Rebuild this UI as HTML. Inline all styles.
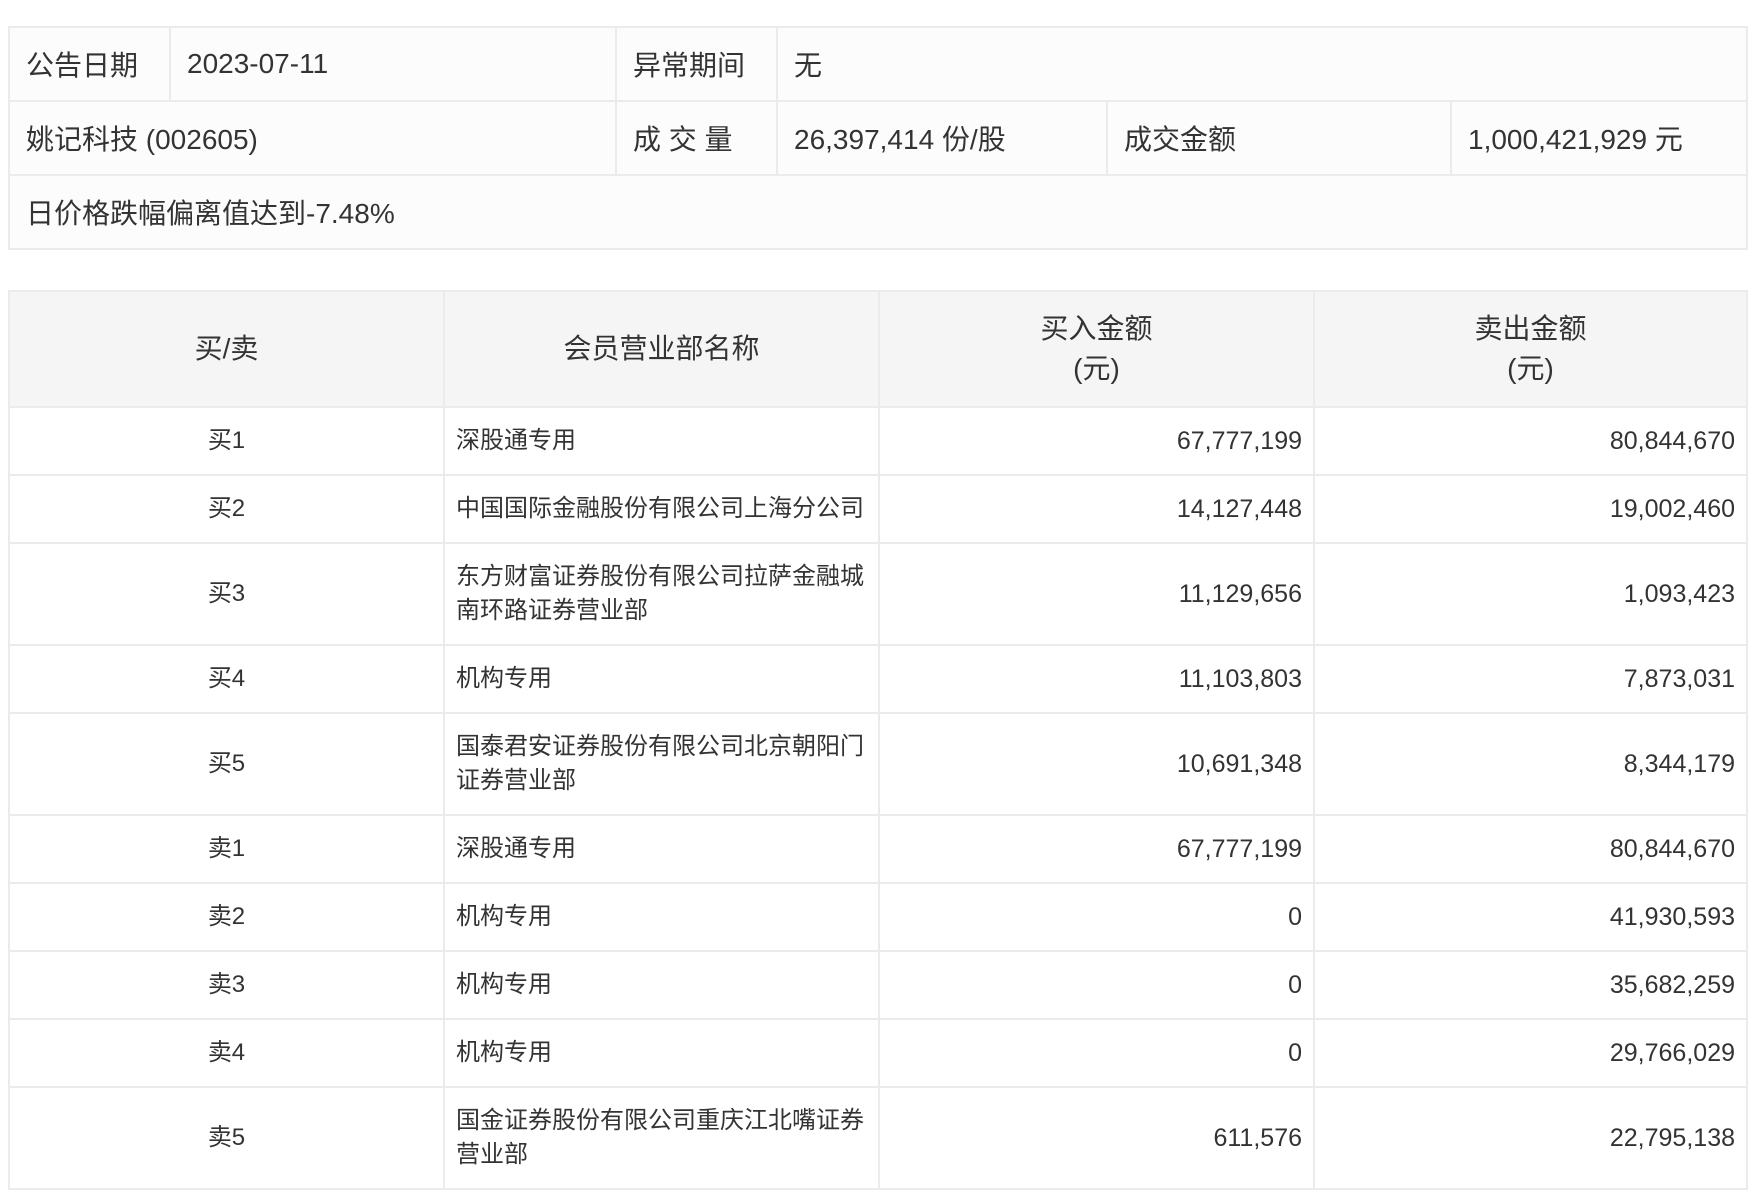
<!DOCTYPE html>
<html><head><meta charset="utf-8"><style>
body{margin:0;background:#fff;font-family:"Liberation Sans","Noto Sans CJK SC",sans-serif;color:#333;}
table{border-collapse:collapse;table-layout:fixed;position:absolute;left:8px;}
td,th{border:2px solid #ebebeb;}
#t1{top:26px;width:1740px;}
#t1 td{background:#fcfcfc;height:72px;font-size:28px;padding:0 16px;white-space:nowrap;}
#t2{top:290px;width:1740px;}
#t2 th{background:#f5f5f5;font-weight:normal;font-size:28px;line-height:40px;height:112px;}
#t2 td{font-size:24px;line-height:34px;height:66px;padding:0 11px;white-space:nowrap;overflow:visible;}
#t2 td.r{font-size:25px;}
#t2 td.c{text-align:center;}
#t2 td.r{text-align:right;}
#t2 tr.d td{height:100px;}
</style></head><body>
<table id="t1">
<colgroup><col style="width:161px"><col style="width:446px"><col style="width:161px"><col style="width:330px"><col style="width:344px"><col></colgroup>
<tr><td>公告日期</td><td>2023-07-11</td><td>异常期间</td><td colspan="3">无</td></tr>
<tr><td colspan="2">姚记科技 (002605)</td><td>成 交 量</td><td>26,397,414 份/股</td><td>成交金额</td><td>1,000,421,929 元</td></tr>
<tr><td colspan="6">日价格跌幅偏离值达到-7.48%</td></tr>
</table>
<table id="t2">
<colgroup><col style="width:435px"><col style="width:435px"><col style="width:435px"><col></colgroup>
<tr><th>买/卖</th><th>会员营业部名称</th><th>买入金额<br>(元)</th><th>卖出金额<br>(元)</th></tr>
<tr><td class="c">买1</td><td>深股通专用</td><td class="r">67,777,199</td><td class="r">80,844,670</td></tr>
<tr><td class="c">买2</td><td>中国国际金融股份有限公司上海分公司</td><td class="r">14,127,448</td><td class="r">19,002,460</td></tr>
<tr class="d"><td class="c">买3</td><td>东方财富证券股份有限公司拉萨金融城<br>南环路证券营业部</td><td class="r">11,129,656</td><td class="r">1,093,423</td></tr>
<tr><td class="c">买4</td><td>机构专用</td><td class="r">11,103,803</td><td class="r">7,873,031</td></tr>
<tr class="d"><td class="c">买5</td><td>国泰君安证券股份有限公司北京朝阳门<br>证券营业部</td><td class="r">10,691,348</td><td class="r">8,344,179</td></tr>
<tr><td class="c">卖1</td><td>深股通专用</td><td class="r">67,777,199</td><td class="r">80,844,670</td></tr>
<tr><td class="c">卖2</td><td>机构专用</td><td class="r">0</td><td class="r">41,930,593</td></tr>
<tr><td class="c">卖3</td><td>机构专用</td><td class="r">0</td><td class="r">35,682,259</td></tr>
<tr><td class="c">卖4</td><td>机构专用</td><td class="r">0</td><td class="r">29,766,029</td></tr>
<tr class="d"><td class="c">卖5</td><td>国金证券股份有限公司重庆江北嘴证券<br>营业部</td><td class="r">611,576</td><td class="r">22,795,138</td></tr>
</table>
</body></html>
